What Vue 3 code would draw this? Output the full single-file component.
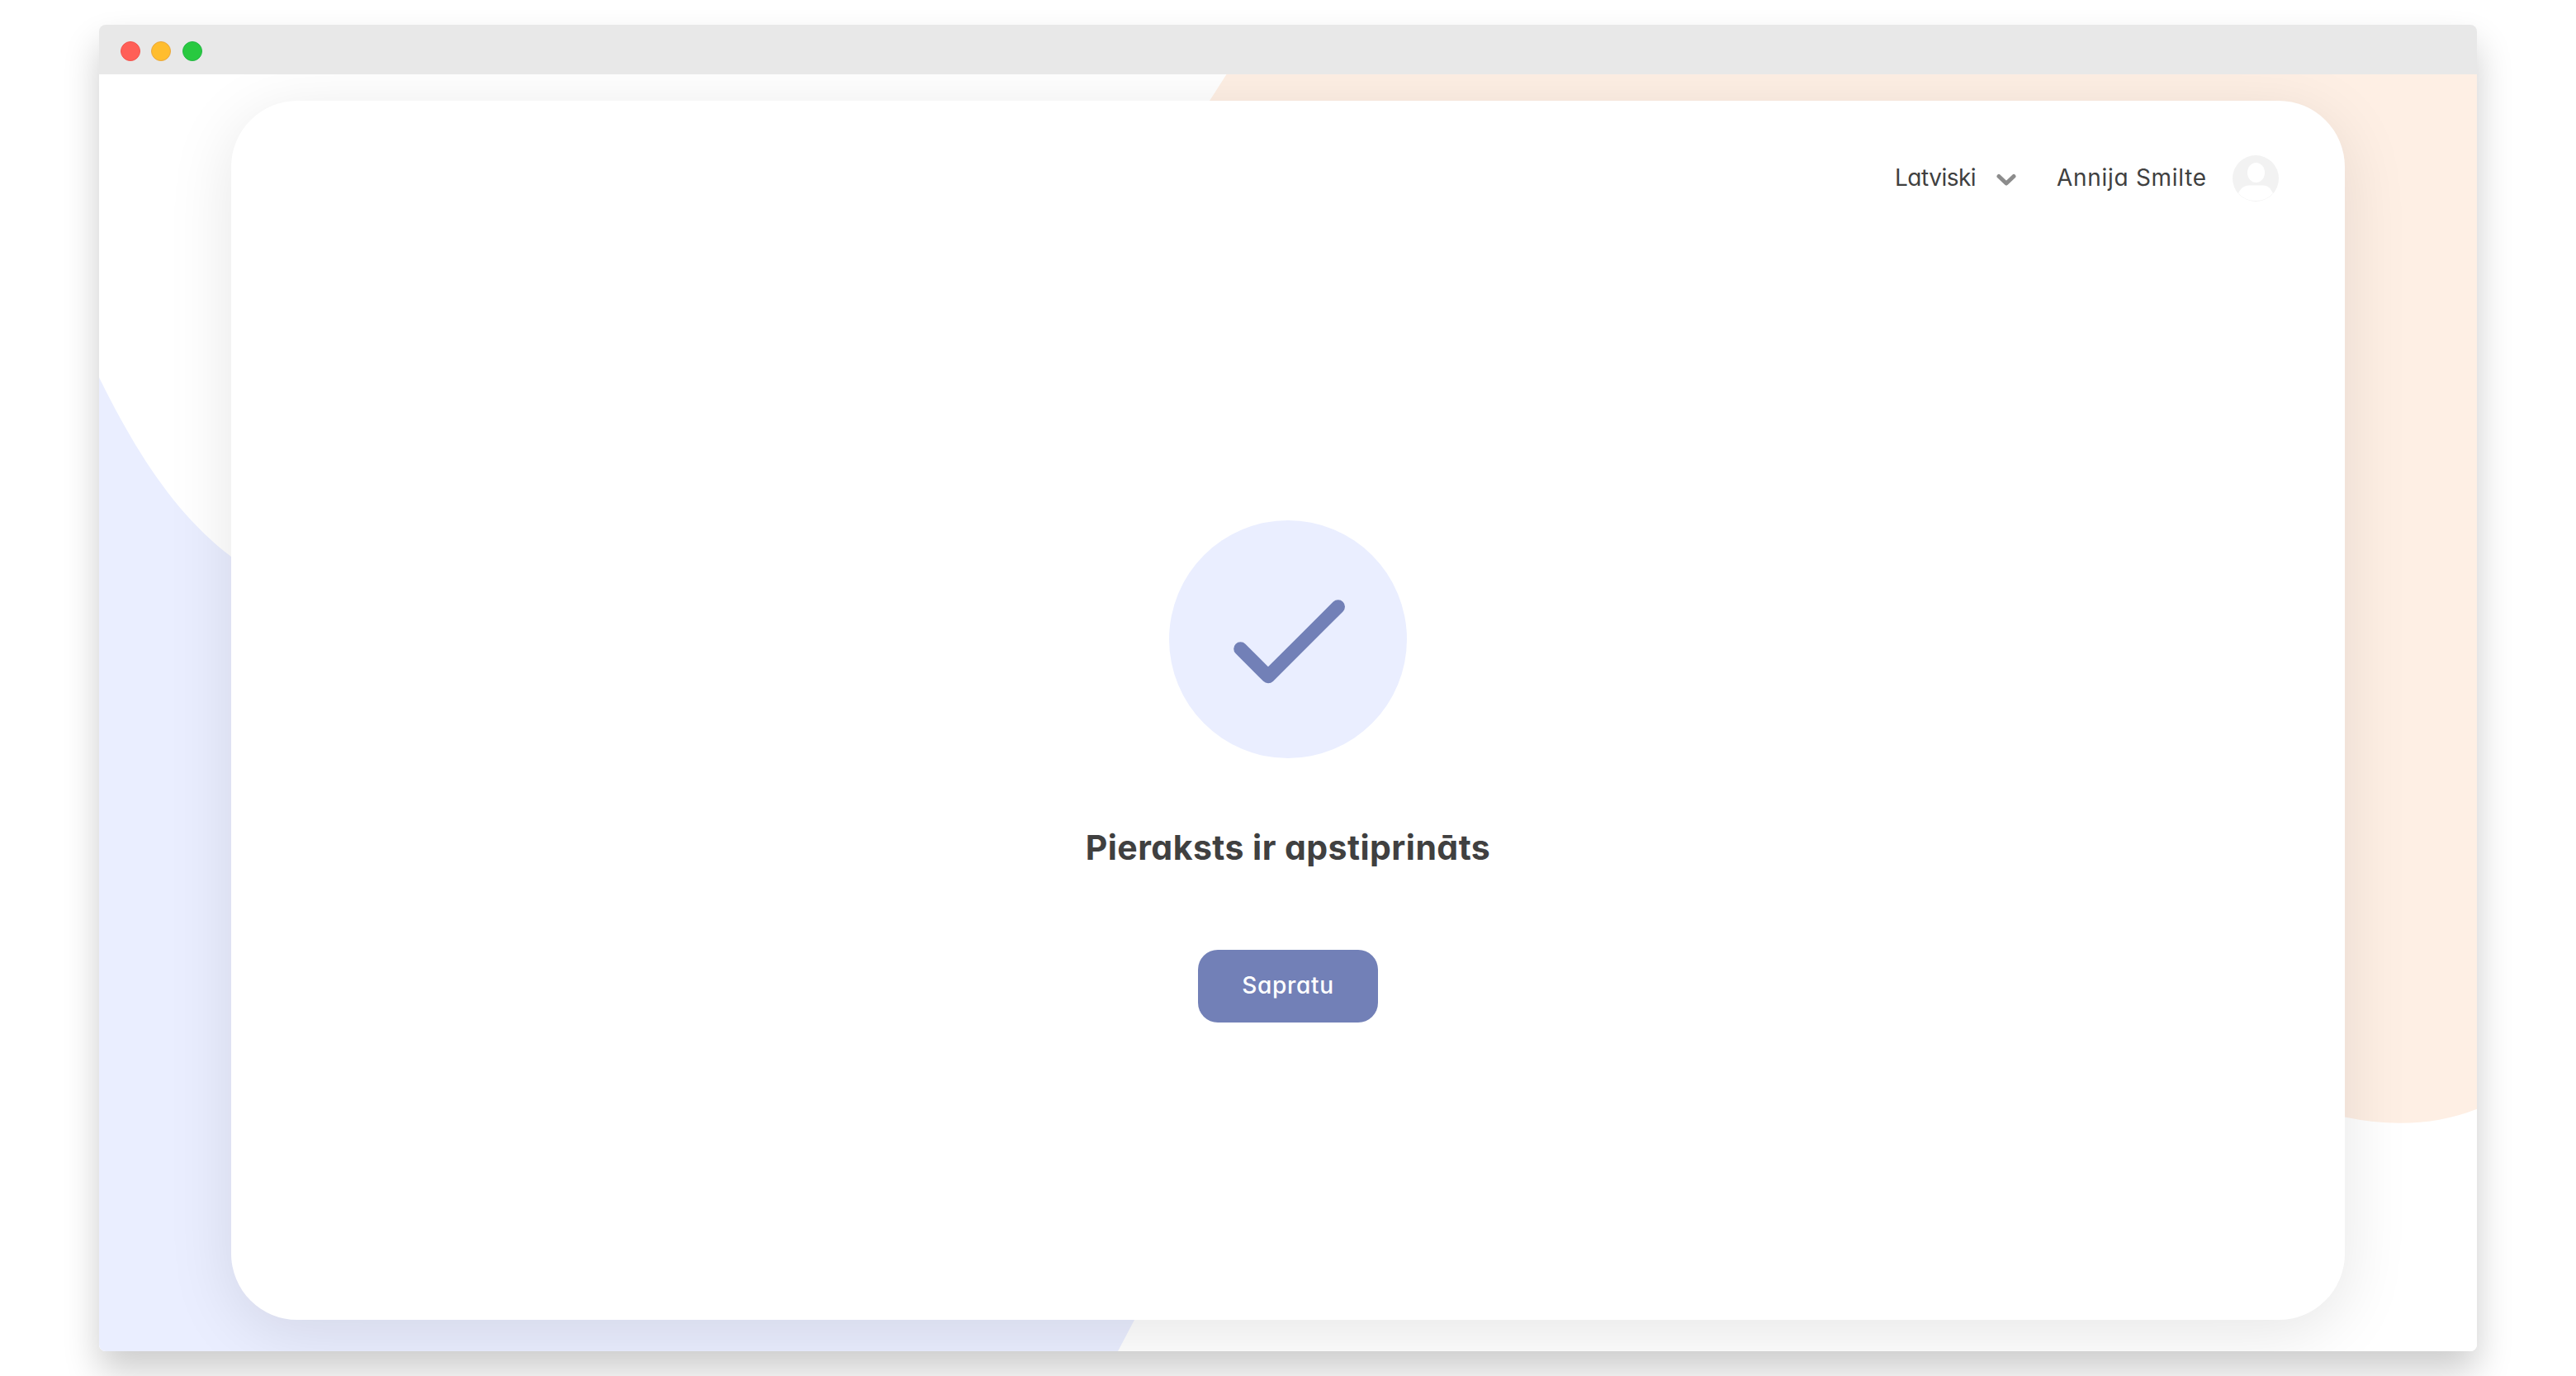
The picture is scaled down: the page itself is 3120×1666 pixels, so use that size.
<template>
  <div class="page">
    <div class="browser">
      <div class="browser-bar">
        <span v-for="name in controls" :key="name" class="control" :class="name"></span>
      </div>

      <div class="browser-body">
        <svg class="shapes" viewBox="0 0 2880 1546" preserveAspectRatio="none" aria-hidden="true">
          <path fill="#feefe4" d="M1365.5 0L1345 32L1500 700L2640 1240L2720 1262.5Q2808 1281 2880 1252.7V0Z" />
          <path fill="#eaeeff" d="M0 367C42 452 90 531 160 584L400 760L1254 1508L1234 1546H0Z" />
        </svg>

        <section class="card">
          <header class="card-header">
            <button class="language" type="button">
              <span class="language-name">{{ language }}</span>
              <svg class="chevron" viewBox="0 0 24 16" aria-hidden="true">
                <path d="M3 3.5L12 12L21 3.5" />
              </svg>
            </button>
            <span class="user-name">{{ userName }}</span>
            <svg class="avatar" viewBox="0 0 56 56" aria-hidden="true">
              <circle cx="28" cy="28" r="28" fill="#f2f2f2" />
              <ellipse cx="28.5" cy="21" rx="10.5" ry="12" fill="#fff" />
              <path fill="#fff" d="M7 46C10 40 14 36.5 20 36.5H37C43 36.5 46 40 49 46A28 28 0 0 1 28 55A28 28 0 0 1 7 46Z" />
            </svg>
          </header>

          <main class="confirmation">
            <div class="badge">
              <svg class="check" viewBox="0 0 136 102" aria-hidden="true">
                <path d="M8.5 59.5L42 93L126.7 8.5" />
              </svg>
            </div>
            <h1 class="title">Pieraksts ir apstiprināts</h1>
            <button class="confirm" type="button">Sapratu</button>
          </main>
        </section>
      </div>
    </div>
  </div>
</template>

<script setup>
import { ref } from 'vue';

const controls = ['close', 'minimize', 'maximize'];
const language = ref('Latviski');
const userName = ref('Annija Smilte');
</script>

<style>
body {
  margin: 0;
  background: #fff;
}
</style>

<style scoped>
.page {
  box-sizing: border-box;
  height: 1666px;
  padding: 30px 120px;
  overflow: hidden;
  color: #404040;
  font-family: Inter, "Noto Sans", sans-serif;
  /* single-storey a */
  font-feature-settings: "cv11";
}

.browser {
  height: 1606px;
  border-radius: 8px;
  box-shadow: 0 24px 44px rgba(0, 0, 0, 0.2);
}

.browser-bar {
  display: flex;
  align-items: center;
  gap: 13.6px;
  box-sizing: border-box;
  height: 60px;
  padding: 4px 0 0 25.7px;
  border-radius: 8px 8px 0 0;
  background: #e8e8e8;
}

.control {
  box-sizing: border-box;
  width: 24px;
  height: 24px;
  border: 1px solid;
  border-radius: 50%;
}

.close {
  border-color: #f3544d;
  background: #ff5f57;
}

.minimize {
  border-color: #eaa73e;
  background: #ffbd2e;
}

.maximize {
  border-color: #24b744;
  background: #28c940;
}

.browser-body {
  position: relative;
  box-sizing: border-box;
  height: 1546px;
  padding: 32px 160px 38px;
  overflow: hidden;
  border-radius: 0 0 8px 8px;
  background: #fff;
}

.shapes {
  position: absolute;
  inset: 0;
  width: 100%;
  height: 100%;
}

.card {
  position: relative;
  box-sizing: border-box;
  height: 1476px;
  padding: 66px 80px 0;
  border-radius: 80px;
  background: #fff;
  box-shadow: 0 16px 80px rgba(0, 0, 0, 0.1);
}

.card-header {
  display: flex;
  align-items: center;
  justify-content: flex-end;
  height: 56px;
  font-size: 28px;
  line-height: 40px;
  white-space: nowrap;
}

.language {
  display: flex;
  align-items: center;
  padding: 0;
  border: 0;
  background: none;
  color: inherit;
  font: inherit;
  font-feature-settings: inherit;
}

.language-name {
  width: 123px;
  padding-bottom: 2px;
  letter-spacing: -0.5px;
  text-align: left;
}

.chevron {
  width: 24px;
  height: 16px;
  margin-top: 3px;
  fill: none;
  stroke: #8c8c8c;
  stroke-width: 5;
  stroke-linecap: round;
  stroke-linejoin: round;
}

.user-name {
  width: 213px;
  margin-left: 49px;
  padding-bottom: 2px;
  letter-spacing: 0.7px;
}

.avatar {
  width: 56px;
  height: 56px;
}

.confirmation {
  display: flex;
  flex-direction: column;
  align-items: center;
  padding-top: 386px;
}

.badge {
  display: flex;
  align-items: center;
  justify-content: center;
  width: 288px;
  height: 288px;
  border-radius: 50%;
  background: #eaeeff;
}

.check {
  width: 136px;
  height: 102px;
  margin-top: 5.4px;
  margin-left: 4px;
  fill: none;
  stroke: #7280b7;
  stroke-width: 16.6;
  stroke-linecap: round;
  stroke-linejoin: round;
}

.title {
  margin: 78px 0 94px;
  font-size: 41px;
  font-weight: 700;
  line-height: 60px;
  letter-spacing: 0.46px;
  white-space: nowrap;
}

.confirm {
  width: 218px;
  height: 88px;
  padding: 0 0 2px;
  border: 0;
  border-radius: 24px;
  background: #7280b7;
  color: #fff;
  font-family: inherit;
  font-feature-settings: inherit;
  font-size: 28px;
  font-weight: 500;
  line-height: 40px;
  letter-spacing: 0.7px;
}
</style>
